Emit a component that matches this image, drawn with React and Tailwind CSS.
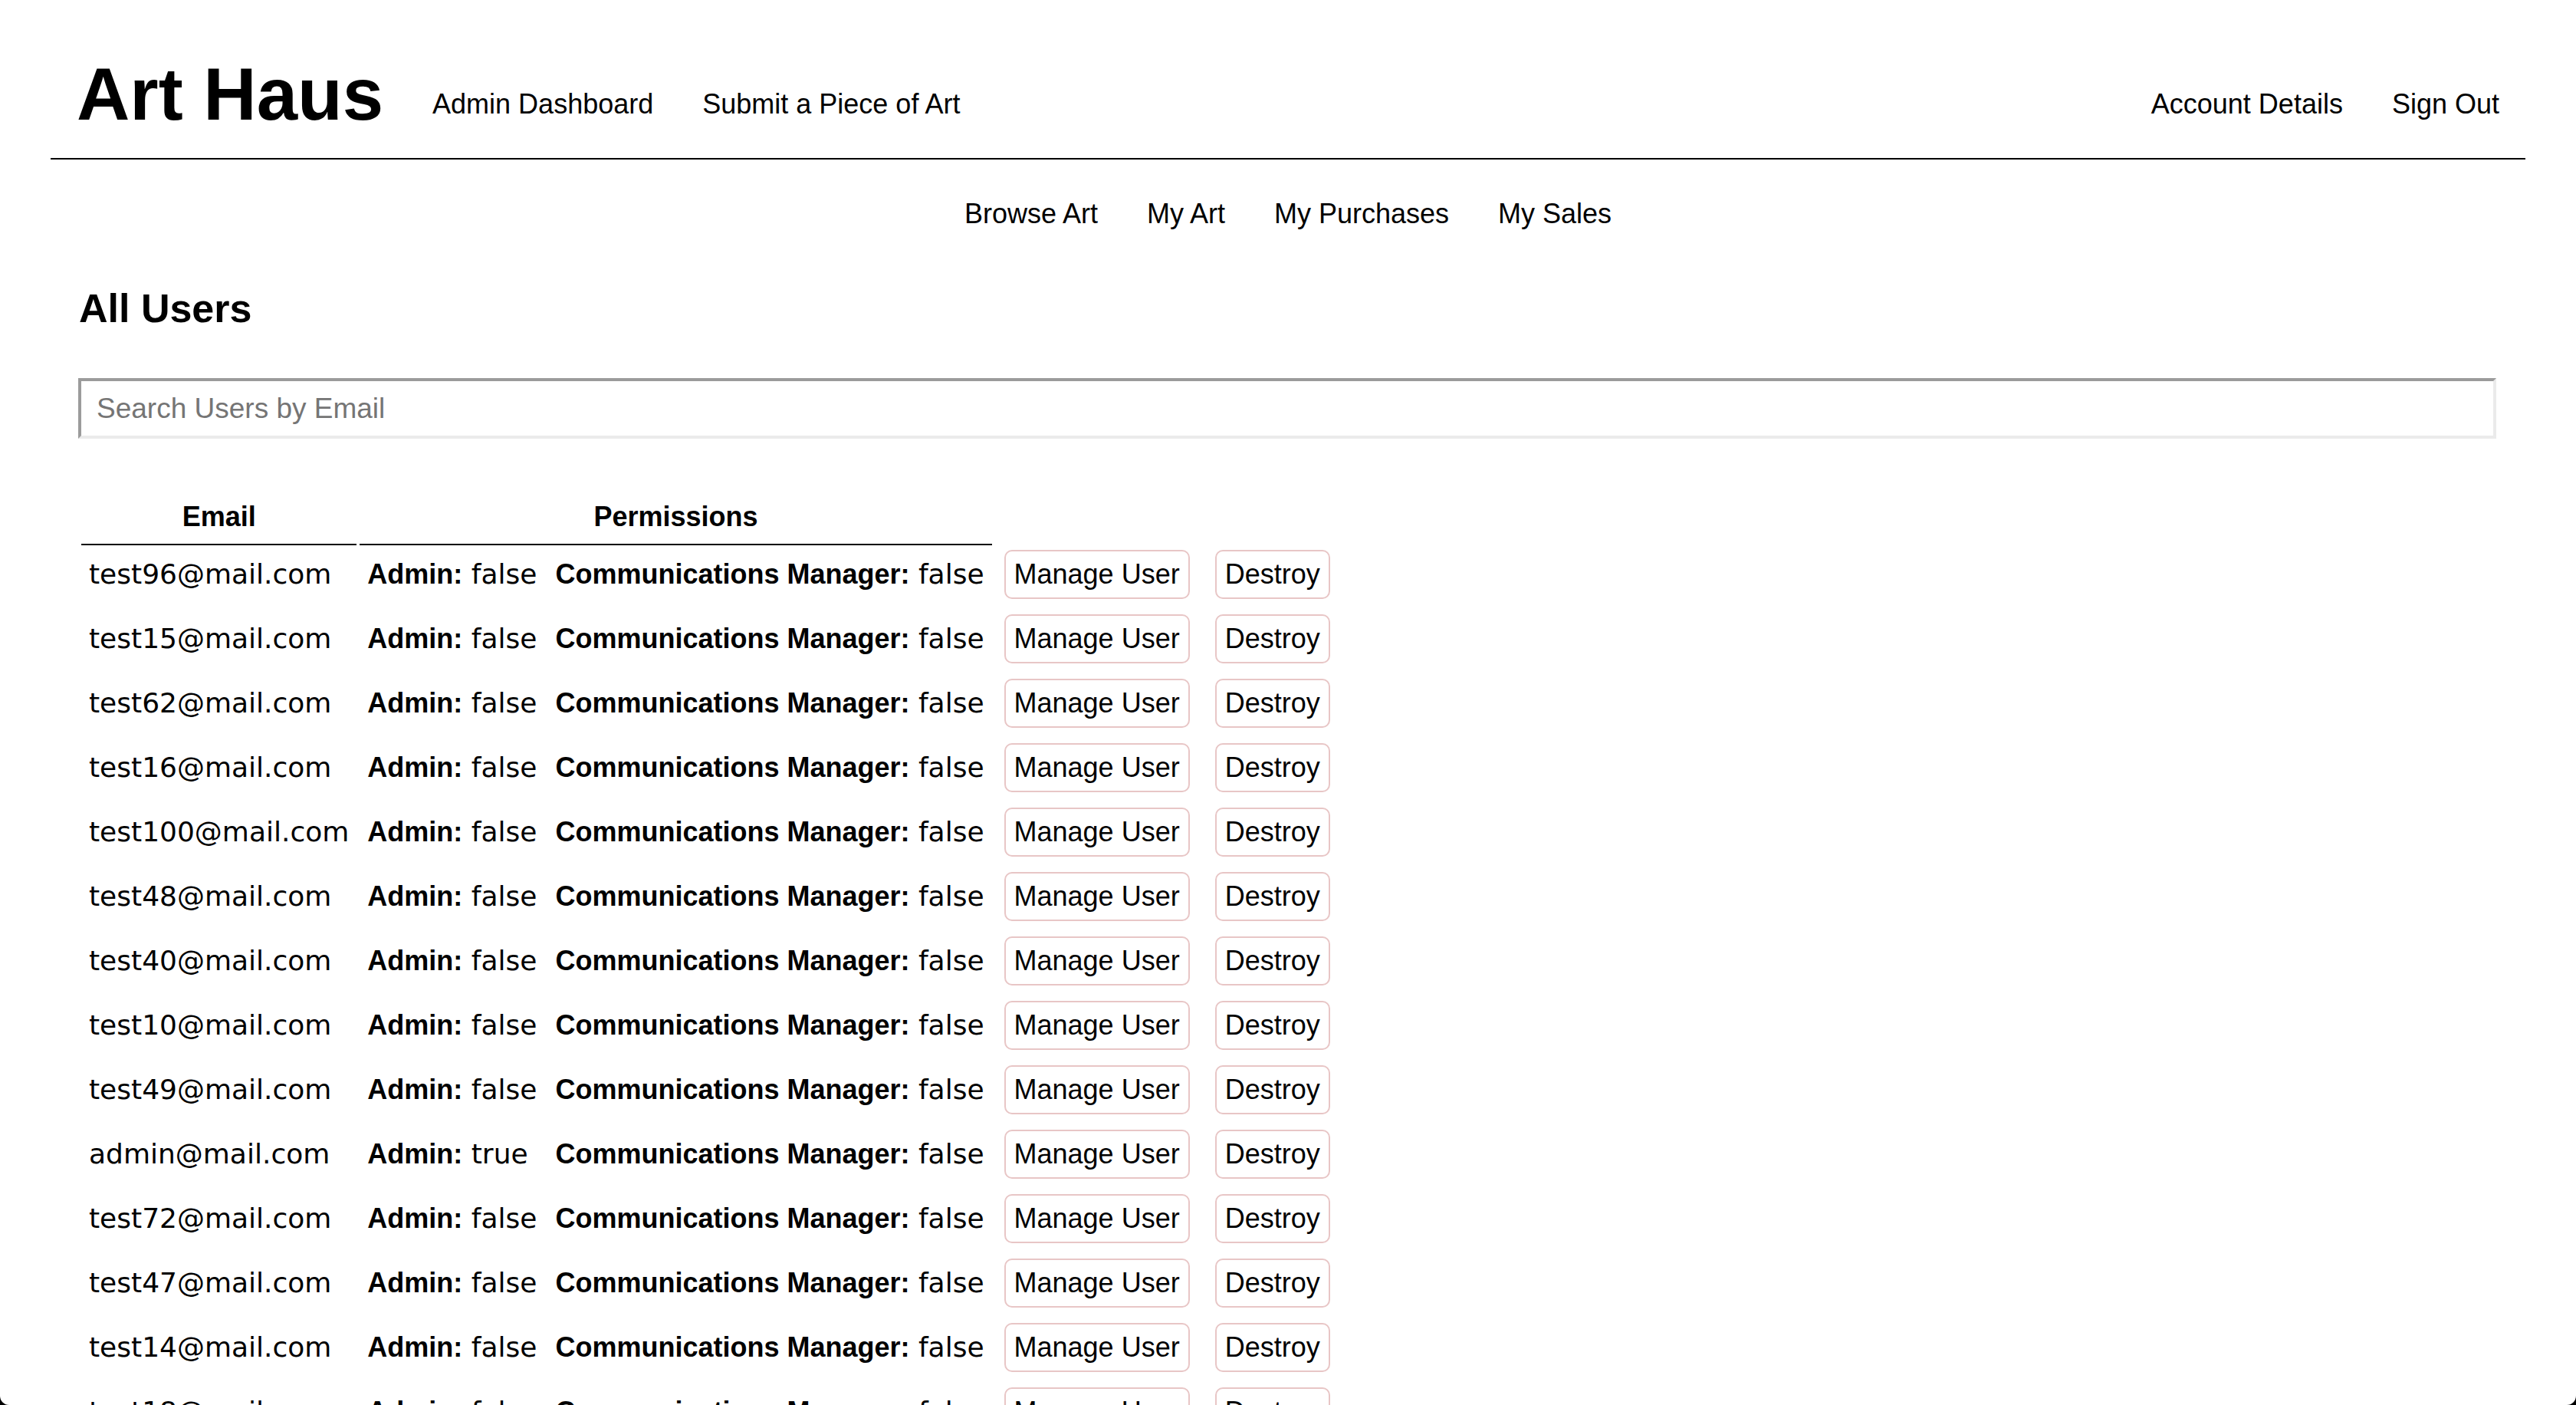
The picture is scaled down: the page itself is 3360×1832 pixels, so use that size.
import React from 'react';

const users = [
    { email: 'test96@mail.com', admin: false, comms: false },
    { email: 'test15@mail.com', admin: false, comms: false },
    { email: 'test62@mail.com', admin: false, comms: false },
    { email: 'test16@mail.com', admin: false, comms: false },
    { email: 'test100@mail.com', admin: false, comms: false },
    { email: 'test48@mail.com', admin: false, comms: false },
    { email: 'test40@mail.com', admin: false, comms: false },
    { email: 'test10@mail.com', admin: false, comms: false },
    { email: 'test49@mail.com', admin: false, comms: false },
    { email: 'admin@mail.com', admin: true, comms: false },
    { email: 'test72@mail.com', admin: false, comms: false },
    { email: 'test47@mail.com', admin: false, comms: false },
    { email: 'test14@mail.com', admin: false, comms: false },
    { email: 'test18@mail.com', admin: false, comms: false },
];

export default function App() {
    return (
        <div className="min-h-screen bg-white text-black font-['Liberation_Sans',Arial,sans-serif]">
            {/* Top header */}
            <header className="mx-[66px] flex items-start border-b-2 border-black px-[34px] pt-[75px] pb-[35px]">
                <h1 className="text-[96px] font-bold leading-none">Art Haus</h1>
                <nav className="ml-[64px] mt-[43px] flex gap-[64px] text-[36px] leading-none">
                    <a href="#">Admin Dashboard</a>
                    <a href="#">Submit a Piece of Art</a>
                </nav>
                <nav className="ml-auto mt-[43px] flex gap-[64px] text-[36px] leading-none">
                    <a href="#">Account Details</a>
                    <a href="#">Sign Out</a>
                </nav>
            </header>

            {/* Secondary nav */}
            <nav className="mt-[53px] flex justify-center gap-[64px] text-[36px] leading-none">
                <a href="#">Browse Art</a>
                <a href="#">My Art</a>
                <a href="#">My Purchases</a>
                <a href="#">My Sales</a>
            </nav>

            <main className="px-[103px]">
                <h2 className="mt-[79px] text-[52px] font-bold leading-none">All Users</h2>

                <input
                    type="text"
                    placeholder="Search Users by Email"
                    className="mt-[65px] -ml-px block h-[79px] w-full border-4 border-solid border-t-[#9b9b9b] border-l-[#9b9b9b] border-r-[#ebebeb] border-b-[#ebebeb] bg-white pl-[20px] text-[37px] outline-none placeholder:text-[#757575]"
                />

                <table className="mt-[81px] -ml-px border-separate border-spacing-x-[4px] border-spacing-y-0 text-[36px] font-['DejaVu_Sans',Verdana,sans-serif]">
                    <thead>
                        <tr className="font-['Liberation_Sans',Arial,sans-serif]">
                            <th className="border-b-2 border-black px-[10px] pb-[15px] text-center font-bold leading-[41px]">Email</th>
                            <th colSpan={2} className="border-b-2 border-black px-[10px] pb-[15px] text-center font-bold leading-[41px]">Permissions</th>
                            <th />
                            <th />
                        </tr>
                    </thead>
                    <tbody>
                        {users.map((u) => (
                            <tr key={u.email}>
                                <td className="whitespace-nowrap px-[10px] pt-[6px] pb-[14px] align-middle">{u.email}</td>
                                <td className="whitespace-nowrap px-[10px] pt-[6px] pb-[14px] align-middle">
                                    <b className="font-['Liberation_Sans',Arial,sans-serif] font-bold">Admin:</b> {String(u.admin)}
                                </td>
                                <td className="whitespace-nowrap px-[10px] pt-[6px] pb-[14px] align-middle">
                                    <b className="font-['Liberation_Sans',Arial,sans-serif] font-bold">Communications Manager:</b> {String(u.comms)}
                                </td>
                                <td className="whitespace-nowrap pl-[12px] pr-[10px] pt-[6px] pb-[14px] align-middle">
                                    <ActionButton label="Manage User" />
                                </td>
                                <td className="whitespace-nowrap pl-[19px] pr-[10px] pt-[6px] pb-[14px] align-middle">
                                    <ActionButton label="Destroy" />
                                </td>
                            </tr>
                        ))}
                    </tbody>
                </table>
            </main>

            {/* display corners */}
            <div className="pointer-events-none fixed inset-0 rounded-b-[12px] shadow-[0_0_0_40px_#000]" />
        </div>
    );
}

function ActionButton({ label }) {
    return (
        <button className="inline-flex h-[64px] items-center rounded-[10px] border-2 border-solid border-[#e8c6c6] bg-white px-[11px] text-[36px] leading-none text-black font-['Liberation_Sans',Arial,sans-serif]">
            {label}
        </button>
    );
}
